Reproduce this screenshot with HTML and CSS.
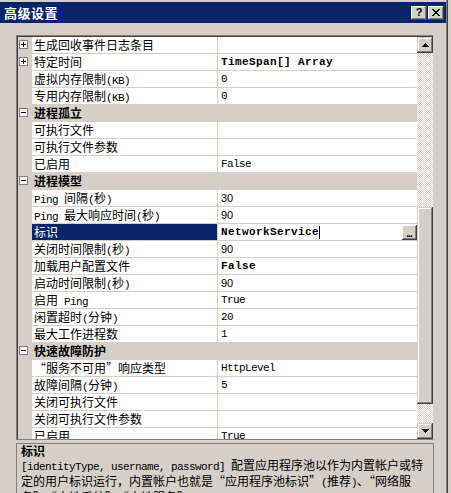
FILE: index.html
```html
<!DOCTYPE html>
<html lang="zh-CN">
<head>
<meta charset="utf-8">
<title>高级设置</title>
<link rel="stylesheet" href="styles.css">
</head>
<body>
<div class="window">
  <div class="titlebar">
    <span class="title">高级设置</span>
    <div class="tbtns">
      <span class="tbtn"><span class="q">?</span></span>
      <span class="tbtn"><svg width="8" height="7" viewBox="0 0 8 7"><path d="M0 0h2v1h1v1h2V1h1V0h2v1H7v1H6v1H5v1h1v1h1v1h1v1H6V6H5V5H3v1H2v1H0V6h1V5h1V4h1V3H2V2H1V1H0z" fill="#000"/></svg></span>
    </div>
  </div>
  <div class="client">
    <div class="grid">
      <div class="gridin">
        <div class="rows">
          <div class="row"><div class="m"><svg class="box" width="9" height="9" viewBox="0 0 9 9"><rect x="0.5" y="0.5" width="8" height="8" fill="#fff" stroke="#808080"/><path d="M2 4h5v1H2zM4 2h1v5H4z" fill="#000"/></svg></div><div class="n">生成回收事件日志条目</div><div class="sep"></div><div class="v"></div></div>
          <div class="row"><div class="m"><svg class="box" width="9" height="9" viewBox="0 0 9 9"><rect x="0.5" y="0.5" width="8" height="8" fill="#fff" stroke="#808080"/><path d="M2 4h5v1H2zM4 2h1v5H4z" fill="#000"/></svg></div><div class="n">特定时间</div><div class="sep"></div><div class="v b">TimeSpan[] Array</div></div>
          <div class="row"><div class="m"></div><div class="n">虚拟内存限制<span class="l">(KB)</span></div><div class="sep"></div><div class="v">0</div></div>
          <div class="row"><div class="m"></div><div class="n">专用内存限制<span class="l">(KB)</span></div><div class="sep"></div><div class="v">0</div></div>
          <div class="row cat"><div class="m"><svg class="box" width="9" height="9" viewBox="0 0 9 9"><rect x="0.5" y="0.5" width="8" height="8" fill="#fff" stroke="#808080"/><path d="M2 4h5v1H2z" fill="#000"/></svg></div><div class="n">进程孤立</div><div class="sep"></div><div class="v"></div></div>
          <div class="row"><div class="m"></div><div class="n">可执行文件</div><div class="sep"></div><div class="v"></div></div>
          <div class="row"><div class="m"></div><div class="n">可执行文件参数</div><div class="sep"></div><div class="v"></div></div>
          <div class="row"><div class="m"></div><div class="n">已启用</div><div class="sep"></div><div class="v">False</div></div>
          <div class="row cat"><div class="m"><svg class="box" width="9" height="9" viewBox="0 0 9 9"><rect x="0.5" y="0.5" width="8" height="8" fill="#fff" stroke="#808080"/><path d="M2 4h5v1H2z" fill="#000"/></svg></div><div class="n">进程模型</div><div class="sep"></div><div class="v"></div></div>
          <div class="row"><div class="m"></div><div class="n"><span class="l">Ping </span>间隔<span class="l">(</span>秒<span class="l">)</span></div><div class="sep"></div><div class="v s">30</div></div>
          <div class="row"><div class="m"></div><div class="n"><span class="l">Ping </span>最大响应时间<span class="l">(</span>秒<span class="l">)</span></div><div class="sep"></div><div class="v s">90</div></div>
          <div class="row"><div class="m"></div><div class="n sel">标识</div><div class="sep"></div><div class="v b edit"><span>NetworkService</span><span class="caret"></span><span class="dots">...</span></div></div>
          <div class="row"><div class="m"></div><div class="n">关闭时间限制<span class="l">(</span>秒<span class="l">)</span></div><div class="sep"></div><div class="v s">90</div></div>
          <div class="row"><div class="m"></div><div class="n">加载用户配置文件</div><div class="sep"></div><div class="v b">False</div></div>
          <div class="row"><div class="m"></div><div class="n">启动时间限制<span class="l">(</span>秒<span class="l">)</span></div><div class="sep"></div><div class="v s">90</div></div>
          <div class="row"><div class="m"></div><div class="n">启用<span class="l"> Ping</span></div><div class="sep"></div><div class="v">True</div></div>
          <div class="row"><div class="m"></div><div class="n">闲置超时<span class="l">(</span>分钟<span class="l">)</span></div><div class="sep"></div><div class="v">20</div></div>
          <div class="row"><div class="m"></div><div class="n">最大工作进程数</div><div class="sep"></div><div class="v">1</div></div>
          <div class="row cat"><div class="m"><svg class="box" width="9" height="9" viewBox="0 0 9 9"><rect x="0.5" y="0.5" width="8" height="8" fill="#fff" stroke="#808080"/><path d="M2 4h5v1H2z" fill="#000"/></svg></div><div class="n">快速故障防护</div><div class="sep"></div><div class="v"></div></div>
          <div class="row"><div class="m"></div><div class="n">“服务不可用”响应类型</div><div class="sep"></div><div class="v">HttpLevel</div></div>
          <div class="row"><div class="m"></div><div class="n">故障间隔<span class="l">(</span>分钟<span class="l">)</span></div><div class="sep"></div><div class="v">5</div></div>
          <div class="row"><div class="m"></div><div class="n">关闭可执行文件</div><div class="sep"></div><div class="v"></div></div>
          <div class="row"><div class="m"></div><div class="n">关闭可执行文件参数</div><div class="sep"></div><div class="v"></div></div>
          <div class="row"><div class="m"></div><div class="n">已启用</div><div class="sep"></div><div class="v">True</div></div>
        </div>
        <div class="vscroll">
          <div class="sbtn"><svg width="7" height="4" viewBox="0 0 7 4"><path d="M3 0h1v1h1v1h1v1h1v1H0V3h1V2h1V1h1z" fill="#000"/></svg></div>
          <div class="track"><div class="thumb"></div></div>
          <div class="sbtn"><svg width="7" height="4" viewBox="0 0 7 4"><path d="M0 0h7v1H6v1H5v1H4v1H3V3H2V2H1V1H0z" fill="#000"/></svg></div>
        </div>
      </div>
    </div>
    <div class="desc">
      <div class="dtitle">标识</div>
      <div class="dline"><span class="l">[identityType, username, password] </span>配置应用程序池以作为内置帐户或特</div>
      <div class="dline">定的用户标识运行，内置帐户也就是“应用程序池标识”<span class="l">(</span>推荐<span class="l">)</span>、“网络服</div>
      <div class="dline">务”、“本地系统”、“本地服务”。</div>
    </div>
  </div>
</div>
</body>
</html>
```

FILE: styles.css
```css
* { box-sizing: border-box; }
html, body { margin: 0; padding: 0; }
body {
  width: 451px;
  height: 493px;
  overflow: hidden;
  background: #d4d0c8;
  font-family: "Noto Sans CJK SC", sans-serif;
  font-size: 12px;
  color: #000;
}
.window {
  width: 448px;
  height: 493px;
  padding-top: 2px;
  background: #d4d0c8;
  border-right: 1px solid #404040;
  box-shadow: inset -1px 0 #808080;
  display: flex;
  flex-direction: column;
}
.titlebar {
  height: 21px;
  margin-right: 1px;
  background: #0a246a;
  display: flex;
  align-items: center;
  justify-content: space-between;
  padding: 0 2px 0 4px;
}
.title {
  color: #fff;
  font-weight: bold;
  font-size: 13px;
  letter-spacing: 0.5px;
  line-height: 21px;
}
.tbtns { display: flex; gap: 1px; }
.tbtn {
  width: 16px;
  height: 14px;
  background: #d4d0c8;
  box-shadow: inset -1px -1px #404040, inset 1px 1px #fff, inset -2px -2px #808080, inset 2px 2px #d4d0c8;
  display: flex;
  align-items: center;
  justify-content: center;
}
.q {
  font-family: "Liberation Sans", sans-serif;
  font-weight: bold;
  font-size: 11px;
  line-height: 11px;
}
.client {
  flex: 1;
  padding: 12px 0 0 16px;
  display: flex;
  flex-direction: column;
  min-height: 0;
}
.grid {
  width: 418px;
  height: 405px;
  border: 1px solid #808080;
  border-right-color: #d4d0c8;
  flex: none;
}
.gridin {
  height: 100%;
  border-top: 1px solid #404040;
  border-left: 1px solid #404040;
  display: flex;
  background: #fff;
}
.rows {
  flex: 1;
  overflow: hidden;
}
.row {
  display: flex;
  height: 17px;
}
.m {
  width: 14px;
  flex: none;
  background: #d4d0c8;
  padding: 3px 0 0 1px;
}
.box { display: block; }
.n {
  width: 185px;
  flex: none;
  border-bottom: 1px solid #d4d0c8;
  padding-left: 2px;
  line-height: 16px;
  white-space: nowrap;
  overflow: hidden;
}
.sep { width: 1px; flex: none; background: #d4d0c8; }
.v {
  flex: 1;
  border-bottom: 1px solid #d4d0c8;
  padding-left: 3px;
  line-height: 16px;
  white-space: nowrap;
  overflow: hidden;
  font-family: "Liberation Mono", monospace;
  font-size: 11px;
  letter-spacing: -0.6px;
}
.v.b { font-weight: bold; letter-spacing: 0.4px; }
.v.s { font-family: "Liberation Sans", sans-serif; letter-spacing: 0; }
.l {
  font-family: "Liberation Mono", monospace;
  font-size: 11px;
  letter-spacing: -0.6px;
}
.row.cat { background: #d4d0c8; }
.row.cat .n { font-weight: bold; }
.n.sel { background: #0a246a; color: #fff; }
.v.edit {
  display: flex;
  align-items: center;
}
.caret {
  width: 1px;
  height: 13px;
  background: #000;
}
.dots {
  margin-left: auto;
  width: 15px;
  height: 15px;
  align-self: flex-start;
  margin-top: 1px;
  background: #d4d0c8;
  box-shadow: inset -1px -1px #404040, inset 1px 1px #fff, inset -2px -2px #808080;
  font-family: "Liberation Sans", sans-serif;
  font-size: 10px;
  line-height: 17px;
  letter-spacing: -1px;
  text-align: center;
  padding-right: 1px;
}
.vscroll {
  width: 16px;
  flex: none;
  display: flex;
  flex-direction: column;
}
.sbtn {
  height: 16px;
  flex: none;
  background: #d4d0c8;
  box-shadow: inset -1px -1px #404040, inset 1px 1px #d4d0c8, inset -2px -2px #808080, inset 2px 2px #fff;
  display: flex;
  align-items: center;
  justify-content: center;
}
.sbtn svg { display: block; shape-rendering: crispEdges; }
.track {
  flex: 1;
  background: repeating-conic-gradient(#d4d0c8 0 25%, #ffffff 0 50%) 0 0 / 2px 2px;
}
.thumb {
  margin-top: 154px;
  height: 197px;
  background: #d4d0c8;
  box-shadow: inset -1px -1px #404040, inset 1px 1px #d4d0c8, inset -2px -2px #808080, inset 2px 2px #fff;
}
.desc {
  margin-top: 3px;
  width: 418px;
  flex: 1;
  border: 1px solid #808080;
  border-bottom: none;
  padding: 0 4px;
  line-height: 14px;
}
.dtitle { font-weight: bold; }
.dline { white-space: nowrap; }
```
